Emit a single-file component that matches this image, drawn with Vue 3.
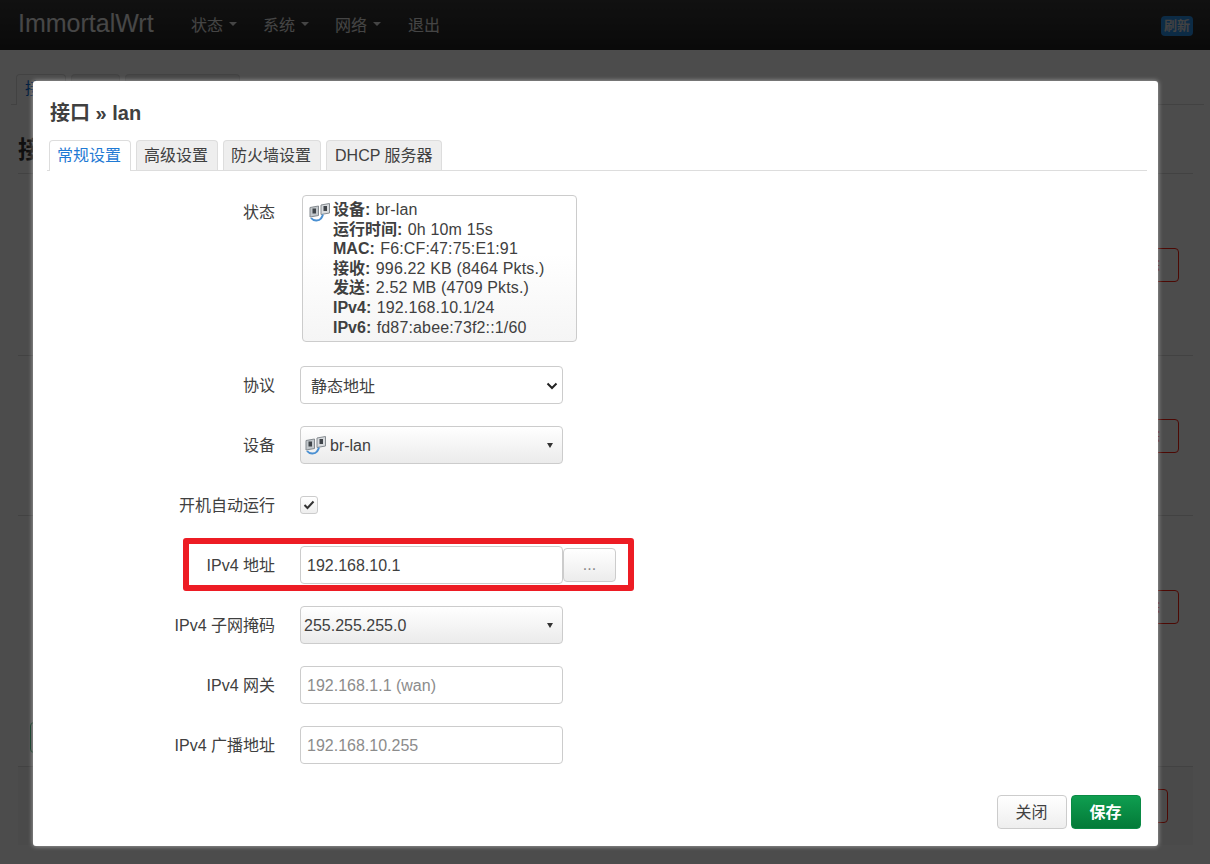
<script setup>
const tabs = ['常规设置', '高级设置', '防火墙设置', 'DHCP 服务器']
const bgTabs = [{ w: 50, t: '接' }, { w: 49, t: '' }, { w: 115, t: '' }]
const bgSections = [
  { h: 182, top: 74 },
  { h: 160, top: 63 },
  { h: 251, top: 74, add: true }
]
const stats = [
  ['设备:', 'br-lan'],
  ['运行时间:', '0h 10m 15s'],
  ['MAC:', 'F6:CF:47:75:E1:91'],
  ['接收:', '996.22 KB (8464 Pkts.)'],
  ['发送:', '2.52 MB (4709 Pkts.)'],
  ['IPv4:', '192.168.10.1/24'],
  ['IPv6:', 'fd87:abee:73f2::1/60']
]
</script>

<template>
  <div class="page">
    <header class="navbar">
      <span class="brand">ImmortalWrt</span>
      <nav class="menu">
        <span class="menu-item">状态<i class="caret"></i></span>
        <span class="menu-item">系统<i class="caret"></i></span>
        <span class="menu-item">网络<i class="caret"></i></span>
        <span class="menu-item last">退出</span>
      </nav>
      <span class="refresh">刷新</span>
    </header>

    <main class="bg">
      <div class="bg-tabs">
        <span v-for="(t, i) in bgTabs" :key="i" class="bg-tab" :style="{ width: t.w + 'px' }">{{ t.t }}</span>
      </div>
      <div class="bg-title">接</div>
      <section
        v-for="(s, i) in bgSections"
        :key="i"
        class="bg-section"
        :style="{ height: s.h + 'px', paddingTop: s.top + 'px' }"
      >
        <span v-if="s.add" class="bg-add"></span>
        <span class="bg-btn">删除</span>
      </section>
      <div class="bg-footer"><span class="bg-btn foot"></span></div>
    </main>

    <div class="overlay"></div>

    <section class="modal">
      <h4 class="title">接口 » lan</h4>
      <ul class="tabs">
        <li v-for="(t, i) in tabs" :key="t" class="tab" :class="{ active: i === 0 }">{{ t }}</li>
      </ul>

      <div class="row status-row">
        <label class="lbl">状态</label>
        <div class="status">
          <svg class="bridge" width="22" height="20" viewBox="0 0 22 20">
            <path d="M1 5.500 9.500 4v9.500L1 15z" fill="#c3c8cc" stroke="#858b90" />
            <path d="M12 3l8.500-1.500v9.500L12 12.500z" fill="#d8dbde" stroke="#858b90" />
            <rect x="3.500" y="6.500" width="3.500" height="5" fill="#3f4449" />
            <rect x="14.500" y="4" width="3.500" height="5" fill="#3f4449" />
            <path d="M2 16c2.500 3.200 8 3.200 10 .5 1-1.200 1.500-2.500 2-4" fill="none" stroke="#4a90d2" stroke-width="2" />
          </svg>
          <div class="lines">
            <div v-for="s in stats" :key="s[0]" class="line"><b>{{ s[0] }}</b> <span class="val">{{ s[1] }}</span></div>
          </div>
        </div>
      </div>

      <div class="row after-status">
        <label class="lbl">协议</label>
        <div class="field native">静态地址
          <svg class="chev" width="12" height="8" viewBox="0 0 12 8"><path d="M1.500 1.500 6 6l4.500-4.500" fill="none" stroke="#222" stroke-width="2" /></svg>
        </div>
      </div>

      <div class="row">
        <label class="lbl">设备</label>
        <div class="field drop device">
          <svg class="bridge small" width="22" height="20" viewBox="0 0 22 20">
            <path d="M1 5.500 9.500 4v9.500L1 15z" fill="#c3c8cc" stroke="#858b90" />
            <path d="M12 3l8.500-1.500v9.500L12 12.500z" fill="#d8dbde" stroke="#858b90" />
            <rect x="3.500" y="6.500" width="3.500" height="5" fill="#3f4449" />
            <rect x="14.500" y="4" width="3.500" height="5" fill="#3f4449" />
            <path d="M2 16c2.500 3.200 8 3.200 10 .5 1-1.200 1.500-2.500 2-4" fill="none" stroke="#4a90d2" stroke-width="2" />
          </svg>
          <span class="latin">br-lan</span>
          <i class="tri"></i>
        </div>
      </div>

      <div class="row">
        <label class="lbl">开机自动运行</label>
        <span class="check">
          <svg width="12" height="10" viewBox="0 0 12 10"><path d="M1.500 5 4.500 8 10.500 1.500" fill="none" stroke="#333" stroke-width="2" /></svg>
        </span>
      </div>

      <div class="row">
        <label class="lbl">IPv4 地址</label>
        <div class="field text"><span class="latin">192.168.10.1</span></div>
        <span class="more">...</span>
        <div class="marker"></div>
      </div>

      <div class="row">
        <label class="lbl">IPv4 子网掩码</label>
        <div class="field drop mask"><span class="latin">255.255.255.0</span><i class="tri"></i></div>
      </div>

      <div class="row">
        <label class="lbl">IPv4 网关</label>
        <div class="field text ph"><span class="latin">192.168.1.1 (wan)</span></div>
      </div>

      <div class="row">
        <label class="lbl">IPv4 广播地址</label>
        <div class="field text ph"><span class="latin">192.168.10.255</span></div>
      </div>

      <footer class="actions">
        <button class="btn close">关闭</button>
        <button class="btn save">保存</button>
      </footer>
    </section>
  </div>
</template>

<style>
html, body { margin: 0; padding: 0; background: #4d4d4d; }
</style>

<style scoped>
.page {
  position: relative;
  width: 1210px;
  height: 864px;
  overflow: hidden;
  background: #fff;
  font-family: "Liberation Sans", "Noto Sans CJK SC", sans-serif;
  font-size: 16px;
  color: #404040;
}
.navbar {
  height: 50px;
  box-sizing: border-box;
  display: flex;
  align-items: center;
  padding: 0 17px 0 18px;
  background: linear-gradient(#3a3a3a, #222);
}
.brand { font-size: 25px; color: #eee; width: 173px; flex: none; margin-top: -3px; }
.menu { display: flex; gap: 26px; margin-top: -3px; }
.menu-item { display: flex; align-items: center; color: #e6e6e6; width: 46px; }
.menu-item.last { margin-left: 1px; width: 32px; }
.caret {
  width: 0; height: 0; margin-left: 6px;
  border-left: 4px solid transparent; border-right: 4px solid transparent; border-top: 4px solid #e6e6e6;
}
.refresh {
  margin-left: auto; box-sizing: border-box; width: 32px; height: 20px; margin-top: 1px;
  background: #2b8fe8; color: #ddd; font-size: 13px; font-weight: 700; line-height: 20px; text-align: center;
  border-radius: 4px; white-space: nowrap;
}

.bg { width: 1175px; margin-left: 18px; }
.bg-tabs {
  display: flex; gap: 5px; width: 1188px; height: 30px; box-sizing: content-box;
  margin: 24px 0 0 -7px; padding-left: 5px; border-bottom: 1px solid #ddd;
}
.bg-tab {
  box-sizing: border-box; height: 31px; border: 1px solid #ddd; border-bottom: 0;
  border-radius: 4px 4px 0 0; background: #eee; padding: 0 8px; line-height: 28px; color: #0069d6; overflow: hidden;
}
.bg-tab:first-child { background: #fff; }
.bg-title { margin-top: 30px; height: 38px; line-height: 30px; font-size: 24px; font-weight: 700; color: #333; }
.bg-section {
  box-sizing: border-box; display: flex; align-items: flex-start; justify-content: flex-end;
  padding-right: 14px; border-top: 1px solid #ddd;
}
.bg-btn {
  box-sizing: border-box; width: 70px; height: 34px; line-height: 32px; text-align: right; padding-right: 18px;
  border: 1px solid #ff1f10; border-radius: 4px; color: #f33; white-space: nowrap;
}
.bg-add {
  box-sizing: border-box; width: 70px; height: 31px; margin-top: 132px; margin-left: 12px; margin-right: auto;
  border: 1px solid #1fae66; border-radius: 4px;
}
.bg-footer {
  box-sizing: border-box; height: 79px; padding: 22px 25px 0 0; display: flex; justify-content: flex-end;
  background: #f9f9f9; border-top: 1px solid #ddd;
}
.overlay { position: absolute; inset: 0; background: rgba(0, 0, 0, .7); }

.modal {
  position: absolute;
  left: 33px; top: 81px;
  width: 1125px; height: 765px;
  box-sizing: border-box;
  background: #fff;
  border-radius: 3px;
  box-shadow: 0 0 5px rgba(255, 255, 255, .55);
  padding: 20px 11px 0 14px;
}
.title { margin: 0; font-size: 20px; line-height: 25px; font-weight: 700; color: #404040; padding-left: 3px; }
.tabs {
  list-style: none; margin: 14px 0 0; padding: 0 0 0 2px;
  display: flex; gap: 5px; border-bottom: 1px solid #ddd; height: 30px;
}
.tab {
  box-sizing: border-box; height: 30px; padding: 0 9px 0 7px; line-height: 29px;
  border: 1px solid #ddd; border-bottom: 0; border-radius: 4px 4px 0 0;
  background: #eee; color: #404040; white-space: nowrap;
}
.tab:last-child { padding: 0 8px; }
.tab.active { height: 31px; background: #fff; color: #1f7ad4; }
.row { display: flex; align-items: center; height: 38px; margin-top: 22px; position: relative; }
.lbl { width: 228px; text-align: right; margin-right: 25px; padding-bottom: 2px; color: #404040; white-space: nowrap; flex: none; }
.status-row { height: 147px; margin-top: 24px; align-items: flex-start; }
.status-row .lbl { padding: 4px 0 0; }
.after-status { margin-top: 24px; }
.status {
  margin-left: 2px; width: 275px; height: 147px; box-sizing: border-box; display: flex;
  border: 1px solid #ccc; border-radius: 4px; padding: 4px 6px;
  background: linear-gradient(#fff 40%, #f5f5f5);
}
.status > .bridge { margin-top: 2px; }
.bridge { flex: none; margin-right: 2px; }
.lines { line-height: 19.600px; white-space: nowrap; }
.line b { font-weight: 700; }
.val { margin-left: 1px; letter-spacing: .15px; }
.field {
  box-sizing: border-box; width: 263px; height: 38px; border: 1px solid #ccc; border-radius: 4px;
  display: flex; align-items: center; flex: none; position: relative; color: #404040;
}
.latin { padding-top: 2px; }
.native { padding-left: 10px; background: #fff; }
.chev { position: absolute; right: 4px; top: 15px; }
.drop { background: linear-gradient(#fff, #ebebeb); padding-left: 3px; }
.device { gap: 3px; padding-left: 4px; }
.bridge.small { margin-right: 0; }
.tri {
  position: absolute; right: 9px; top: 16px; width: 0; height: 0;
  border-left: 3px solid transparent; border-right: 3px solid transparent; border-top: 5px solid #333;
}
.text { padding-left: 6px; background: #fff; }
.ph { color: #8c8c8c; }
.check {
  box-sizing: border-box; width: 18px; height: 18px; border: 1px solid #ccc; border-radius: 3px;
  display: flex; align-items: center; justify-content: center; background: linear-gradient(#fff, #eee);
}
.more {
  box-sizing: border-box; width: 53px; height: 34px;
  border: 1px solid #ccc; border-radius: 4px; background: linear-gradient(#fff, #ececec);
  display: flex; align-items: center; justify-content: center; color: #888;
}
.marker {
  position: absolute; left: 136px; top: -8px; width: 451px; height: 53px; box-sizing: border-box;
  border: 6px solid #ed1c24; border-radius: 3px; pointer-events: none;
}
.actions { display: flex; justify-content: flex-end; gap: 4px; margin-top: 31px; padding-right: 6px; }
.btn { box-sizing: border-box; width: 70px; height: 34px; border-radius: 4px; font-family: inherit; font-size: 16px; padding: 0 1px 2px 0; }
.close { background: linear-gradient(#fff, #eee); border: 1px solid #ccc; color: #404040; }
.save { background: linear-gradient(#0f9e50, #037a38); border: 1px solid #0a8a45; color: #fff; font-weight: 700; }
</style>
